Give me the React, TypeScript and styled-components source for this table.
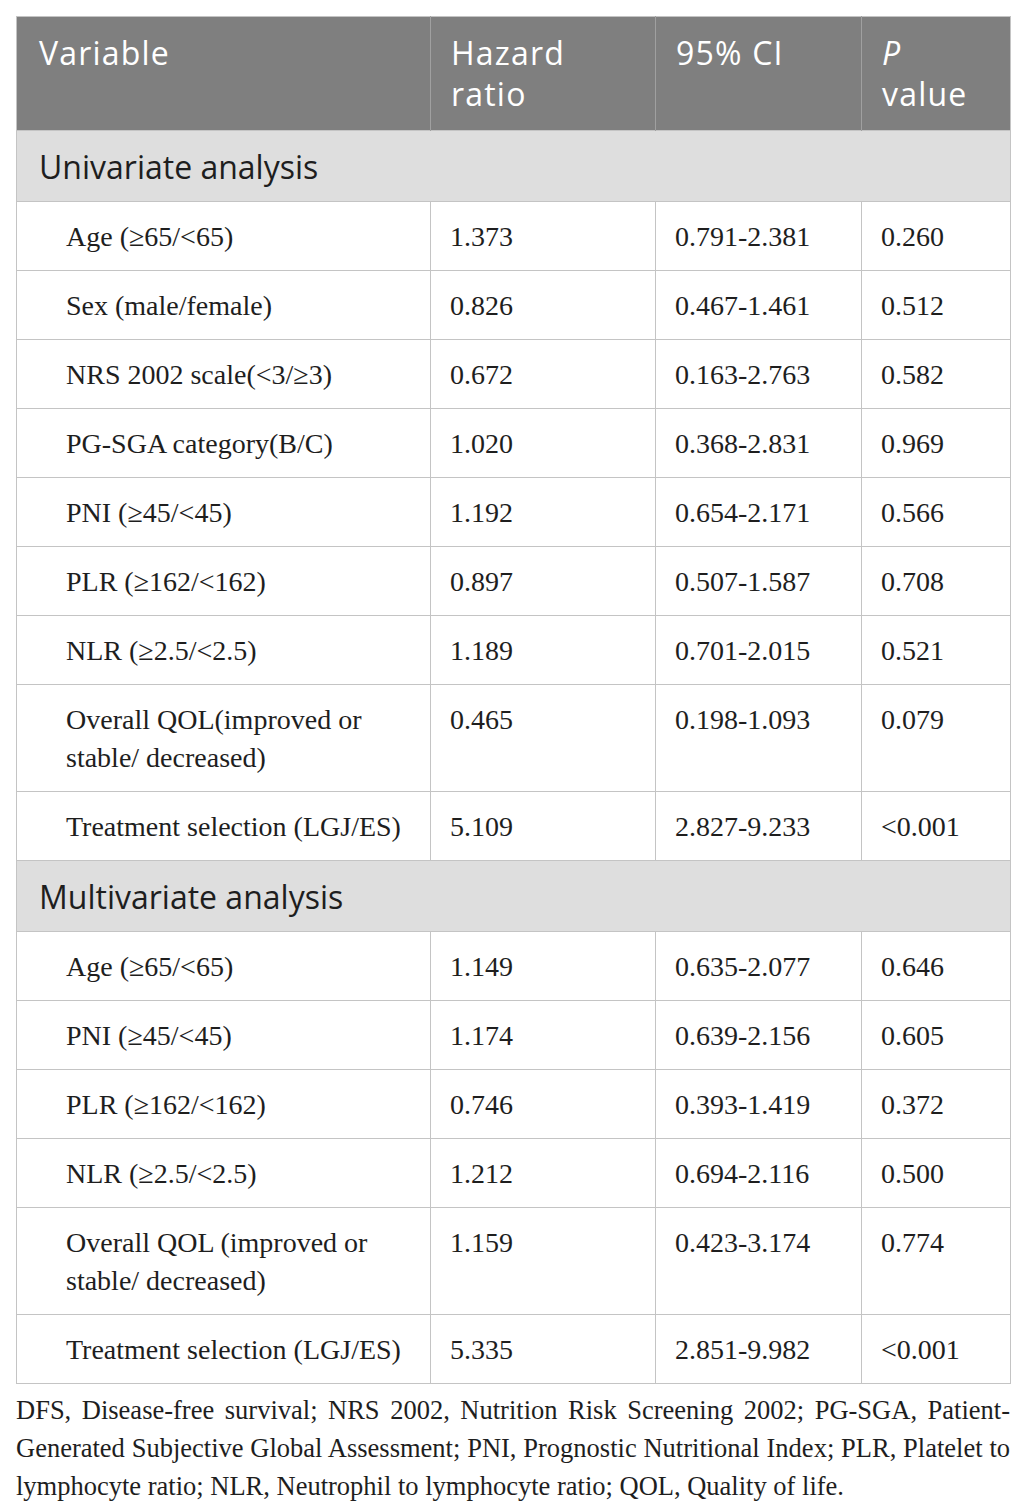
import React from "react";
import styled, { createGlobalStyle } from "styled-components";

const Global = createGlobalStyle`
  html, body { margin: 0; padding: 0; background: #ffffff; }
  body { padding: 16px 16px 0 16px; }
`;

const Wrapper = styled.div`
  width: 994px;
`;

const Table = styled.table`
  width: 994px;
  border-collapse: collapse;
  table-layout: fixed;
  border: 1px solid #c4c4c4;
`;

const HeadCell = styled.th<{ $w: number }>`
  width: ${(p) => p.$w}px;
  background: #7f7f7f;
  color: #ffffff;
  font-family: "Open Sans", "Noto Sans", sans-serif;
  font-weight: 400;
  font-size: 32px;
  letter-spacing: 1.2px;
  line-height: 41px;
  text-align: left;
  vertical-align: top;
  padding: 15px 18px 16px 20px;
  border-left: 1px solid #a0a0a0;
  box-sizing: border-box;
  &:first-child { padding-left: 22px; border-left: none; }
`;

const HeadLine = styled.span`
  display: block;
`;

const SectionCell = styled.td`
  background: #dedede;
  color: #1e1e1e;
  font-family: "Open Sans", "Noto Sans", sans-serif;
  font-size: 32px;
  line-height: 41px;
  padding: 15px 22px 14px 22px;
  border-top: 1px solid #c4c4c4;
  border-bottom: 1px solid #c4c4c4;
`;

const Cell = styled.td<{ $indent?: boolean }>`
  font-family: "Liberation Serif", "DejaVu Serif", serif;
  font-size: 28px;
  line-height: 38px;
  color: #1e1e1e;
  vertical-align: top;
  padding: 16px 19px 14px ${(p) => (p.$indent ? 49 : 19)}px;
  border: 1px solid #c4c4c4;
`;

const Note = styled.div`
  margin: 7px 0 0 0;
  font-family: "Liberation Serif", "DejaVu Serif", serif;
  font-size: 26.5px;
  line-height: 38px;
  color: #1e1e1e;
`;

const NoteLine = styled.span<{ $last?: boolean }>`
  display: block;
  white-space: nowrap;
  text-align: ${(p) => (p.$last ? "left" : "justify")};
  text-align-last: ${(p) => (p.$last ? "left" : "justify")};
`;

type Row = [string, string, string, string];

const uni: Row[] = [
  ["Age (≥65/<65)", "1.373", "0.791-2.381", "0.260"],
  ["Sex (male/female)", "0.826", "0.467-1.461", "0.512"],
  ["NRS 2002 scale(<3/≥3)", "0.672", "0.163-2.763", "0.582"],
  ["PG-SGA category(B/C)", "1.020", "0.368-2.831", "0.969"],
  ["PNI (≥45/<45)", "1.192", "0.654-2.171", "0.566"],
  ["PLR (≥162/<162)", "0.897", "0.507-1.587", "0.708"],
  ["NLR (≥2.5/<2.5)", "1.189", "0.701-2.015", "0.521"],
  ["Overall QOL(improved or stable/ decreased)", "0.465", "0.198-1.093", "0.079"],
  ["Treatment selection (LGJ/ES)", "5.109", "2.827-9.233", "<0.001"],
];

const multi: Row[] = [
  ["Age (≥65/<65)", "1.149", "0.635-2.077", "0.646"],
  ["PNI (≥45/<45)", "1.174", "0.639-2.156", "0.605"],
  ["PLR (≥162/<162)", "0.746", "0.393-1.419", "0.372"],
  ["NLR (≥2.5/<2.5)", "1.212", "0.694-2.116", "0.500"],
  ["Overall QOL (improved or stable/ decreased)", "1.159", "0.423-3.174", "0.774"],
  ["Treatment selection (LGJ/ES)", "5.335", "2.851-9.982", "<0.001"],
];

const Rows = ({ rows }: { rows: Row[] }) => (
  <>
    {rows.map((r, i) => (
      <tr key={i}>
        <Cell $indent>{r[0]}</Cell>
        <Cell>{r[1]}</Cell>
        <Cell>{r[2]}</Cell>
        <Cell>{r[3]}</Cell>
      </tr>
    ))}
  </>
);

export default function App() {
  return (
    <Wrapper>
      <Global />
      <Table>
        <thead>
          <tr>
            <HeadCell $w={414}>Variable</HeadCell>
            <HeadCell $w={225}>
              <HeadLine>Hazard</HeadLine>
              <HeadLine>ratio</HeadLine>
            </HeadCell>
            <HeadCell $w={206}>95% CI</HeadCell>
            <HeadCell $w={149}>
              <HeadLine>
                <i>P</i>
              </HeadLine>
              <HeadLine>value</HeadLine>
            </HeadCell>
          </tr>
        </thead>
        <tbody>
          <tr>
            <SectionCell colSpan={4}>Univariate analysis</SectionCell>
          </tr>
          <Rows rows={uni} />
          <tr>
            <SectionCell colSpan={4}>Multivariate analysis</SectionCell>
          </tr>
          <Rows rows={multi} />
        </tbody>
      </Table>
      <Note>
        <NoteLine>
          DFS, Disease-free survival; NRS 2002, Nutrition Risk Screening 2002; PG-SGA, Patient-
        </NoteLine>
        <NoteLine>
          Generated Subjective Global Assessment; PNI, Prognostic Nutritional Index; PLR, Platelet to
        </NoteLine>
        <NoteLine $last>
          lymphocyte ratio; NLR, Neutrophil to lymphocyte ratio; QOL, Quality of life.
        </NoteLine>
      </Note>
    </Wrapper>
  );
}
